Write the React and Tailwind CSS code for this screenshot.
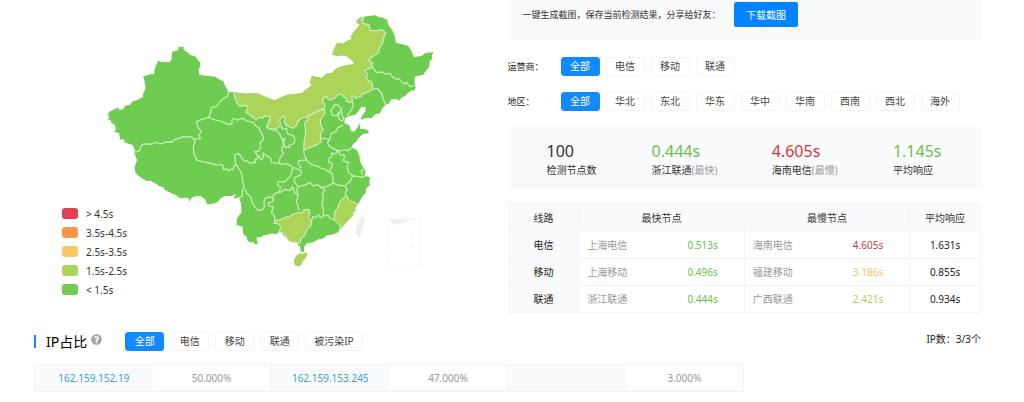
import { FaQuestionCircle } from 'react-icons/fa';

const LEGEND = [
  ['bg-[#e2414e]', '> 4.5s'],
  ['bg-[#ff9444]', '3.5s-4.5s'],
  ['bg-[#f9c766]', '2.5s-3.5s'],
  ['bg-[#acd459]', '1.5s-2.5s'],
  ['bg-[#6ecc50]', '< 1.5s'],
];

const STATS = [
  ['100', '检测节点数', '', 'text-[#2f3336]'],
  ['0.444s', '浙江联通', '(最快)', 'text-[#67c24a]'],
  ['4.605s', '海南电信', '(最慢)', 'text-[#d9363e]'],
  ['1.145s', '平均响应', '', 'text-[#67c24a]'],
];

const ROWS = [
  ['电信', '上海电信', '0.513s', '海南电信', '4.605s', 'text-[#cc3a42]', '1.631s'],
  ['移动', '上海移动', '0.496s', '福建移动', '3.186s', 'text-[#f2c46a]', '0.855s'],
  ['联通', '浙江联通', '0.444s', '广西联通', '2.421s', 'text-[#a5cf55]', '0.934s'],
];

const IPS = [
  ['162.159.152.19', '50.000%'],
  ['162.159.153.245', '47.000%'],
  ['', '3.000%'],
];

function Options({ items }) {
  return (
    <div className="flex flex-wrap gap-[6px]">
      {items.map((t, i) => (
        <button
          key={t}
          type="button"
          aria-pressed={i === 0}
          className={
            i === 0
              ? 'h-[19px] min-w-[39px] rounded-[3px] border border-[#1389ff] bg-[#1389ff] px-2 leading-[17px] text-white'
              : 'h-[19px] min-w-[39px] rounded-[3px] border border-[#f3f4f5] bg-white px-2 leading-[17px] text-[#444]'
          }
        >
          {t}
        </button>
      ))}
    </div>
  );
}

function ChinaMap() {
  return (
    <svg viewBox="-198 0 1421 900" className="w-full" role="img" aria-label="中国地图">
      <path
        fill="#6ecc50"
        d="M235 141L250 140L252 150L262 156L270 165L281 167L288 171L294 181L301 188L300 200L296 207L298 224L322 228L345 230L356 238L370 244L376 259L386 276L403 277L440 281L462 279L478 282L492 291L506 294L515 299L525 301L545 291L560 285L605 280L620 268L635 256L630 245L636 228L665 234L680 222L695 220L710 205L730 198L763 192L758 182L740 168L725 166L708 168L704 163L696 166L705 142L712 128L730 131L745 121L755 118L753 108L762 95L780 75L768 65L778 54L792 50L810 47L827 46L836 52L850 53L862 60L866 76L878 92L885 108L888 128L905 132L925 138L933 149L942 171L965 168L975 160L1001 156L996 166L998 176L990 182L988 202L978 212L970 224L945 230L944 250L947 262L944 272L938 270L925 278L912 290L906 292L899 302L890 298L875 298L868 310L858 314L848 324L840 340L828 342L815 354L795 355L783 360L785 350L797 334L797 322L785 320L774 336L765 345L748 348L735 355L733 370L748 375L752 391L762 396L772 384L779 371L782 387L792 387L807 392L805 400L788 403L776 414L768 426L760 432L755 442L772 452L779 470L781 486L790 503L797 512L795 528L811 533L808 545L810 556L799 565L797 580L788 588L778 607L772 615L765 622L770 630L761 636L760 646L750 658L736 670L723 688L718 688L716 696L708 700L692 705L680 706L672 715L655 719L640 727L620 731L613 741L612 757L602 755L600 735L595 740L593 728L570 726L555 710L540 695L528 703L515 701L500 705L492 705L484 711L470 713L473 733L465 733L460 726L450 728L443 722L440 710L430 703L428 680L410 675L411 655L425 637L423 609L417 592L400 597L408 582L396 588L375 588L363 595L356 603L345 610L322 614L315 597L303 589L290 588L276 593L268 605L265 593L240 595L229 586L215 580L195 570L190 562L180 560L165 549L150 542L142 544L125 535L107 520L104 503L111 480L103 458L105 450L98 435L75 428L72 419L60 418L58 400L42 395L48 390L45 375L35 370L32 361L24 359L28 350L23 345L28 335L50 325L56 324L58 330L70 327L76 317L90 314L98 304L112 300L128 292L130 280L137 265L132 235L128 230L152 223L163 222L163 210L169 195L175 182L185 186L208 187L215 178L216 156L235 150Z"
      />
      <g transform="translate(390 30)" fill="#acd459">
        <path d="M12 248L15 265L30 290L52 290L48 308L78 330L88 322L118 320L110 350L140 357L148 350L148 330L165 320L168 345L190 355L215 325L235 318L282 295L278 275L290 260L302 270L335 252L348 262L350 275L362 278L365 258L378 265L410 248L430 238L425 215L410 205L404 182L428 172L428 160L415 150L445 125L458 100L468 68L455 58L445 62L420 62L418 45L400 40L402 20L388 24L378 35L390 45L363 78L365 88L340 101L322 98L306 136L335 136L350 138L368 152L373 162L340 168L320 175L305 190L290 190L275 204L246 198L240 215L245 226L230 238L215 250L170 255L135 271L116 264L88 252L70 249L50 251Z" />
      </g>
      <g transform="translate(390 270)" fill="#acd459" stroke="#dff3d0" strokeWidth="3" strokeLinejoin="round">
        <path d="M232 80L238 74L250 72L265 62L283 57L285 72L275 84L272 90L272 105L280 118L273 132L272 145L275 155L270 160L245 172L222 180L222 160L228 125L225 110L225 95L232 92Z" />
        <path d="M135 392L150 390L165 382L178 380L190 372L205 368L215 370L220 360L237 358L240 372L235 382L245 392L243 410L233 415L228 428L222 440L216 443L210 460L195 458L180 456L168 440L165 430L148 428L152 410L145 402L132 400Z" />
        <path d="M330 335L340 323L350 318L358 333L372 336L384 345L376 356L380 362L371 366L370 376L350 398L333 418L328 402L312 390L315 365L324 352Z" />
        <path stroke="none" d="M200 496L208 491L222 491L226 487L233 492L228 505L218 514L215 524L208 530L194 525L192 510Z" />
      </g>
      <g fill="none" stroke="#c4ecb5" strokeWidth="4" strokeLinejoin="round">
        <path d="M386 275L383 290L370 296L360 305L350 320L335 322L332 338L326 352L310 357L289 366L294 380L304 395L296 405L302 417L280 416L277 412L250 410L237 415L225 418L215 427L195 427L185 432L175 430L165 427L155 433L130 432L122 440L120 452L103 457" />
        <path d="M280 416L286 424L280 440L282 460L290 480L310 486L335 490L348 495L368 495L372 510L380 506L385 514L392 508L400 510L402 498L410 495L425 520L427 535L432 560L426 575L428 588L418 592" />
        <path d="M326 352L345 360L365 364L385 373L396 372L396 360L402 355L412 361L420 357L430 355L440 363L460 367L466 376L478 385L482 398L491 410L489 421L480 428L482 442L476 454L465 455L470 463L475 475L465 480L468 487L450 490L440 482L432 484L425 472L415 460L405 465L405 482L408 495" />
        <path d="M470 468L480 470L482 480L490 475L490 458L497 465L505 470L512 475L515 488L527 488L540 492" />
      </g>
      <g transform="translate(390 30)" fill="none" stroke="#c4ecb5" strokeWidth="4" strokeLinejoin="round">
        <path d="M12 248L15 265L20 270L20 280L30 290L45 285L54 290L48 308L62 315L78 330L88 322L98 325L104 318L122 320L118 335L110 350L118 357L140 357L148 350L152 340L148 330L160 318L166 322L163 335L168 345L190 355L200 346L203 335L215 325L235 318L250 310L265 303L282 295L286 288L278 275L279 264L290 260L295 268L302 270L315 264L322 255L335 252L342 262L348 262L350 275L362 278L368 270L365 258L372 258L378 265L395 258L400 250L410 248L430 238L425 215L415 213L410 205L412 192L404 182L428 172L424 162L428 158L415 150L430 138L445 130L450 112L458 100L462 82L468 68L455 58L445 62L420 62L418 45L400 40L396 32L402 20" />
        <path d="M428 172L440 188L455 186L465 192L480 190L487 200L500 208L508 205L515 216L525 222L530 217L540 230L552 228" />
        <path d="M430 238L442 235L455 250L460 268L468 284M366 266L370 285L365 300L360 305L352 318M305 296L312 292L312 285L325 285L330 292L335 296L332 305L326 308L320 317L308 316L303 306ZM332 305L326 314L326 326L336 333L342 325L336 318L337 304" />
      </g>
      <g transform="translate(390 270)" fill="none" stroke="#c4ecb5" strokeWidth="4" strokeLinejoin="round">
        <path d="M115 115L130 120L140 122L150 135L158 150L160 165L155 175L160 190L150 205L148 215L150 222L172 222L190 232L205 238L215 242L212 255L195 262L193 275L205 290L200 300L205 315L200 335L208 362" />
        <path d="M152 105L158 118L170 115L172 130L192 138L195 155L188 163L178 165L180 172L165 172L162 155L166 145L155 148" />
        <path d="M190 232L185 245L182 258L165 275L145 275L142 285L152 292L148 305L130 315L130 325L120 320L105 325L102 340L104 350L98 358L84 362L75 350L68 340L62 320L50 310L48 302L42 300" />
        <path d="M148 310L165 298L180 302L188 290L195 310L205 315M130 325L128 336L115 340L118 350L130 350L125 370L133 376L135 392" />
        <path d="M222 180L222 190L230 210L207 212L205 222L214 235M230 210L236 218L250 225L265 230L275 235L290 240L298 247L308 252L310 280L290 290L275 293L262 284L250 288L240 278L228 284L205 290" />
        <path d="M275 145L288 147L300 148L303 132L318 125L325 112L340 106M298 148L293 160L302 172L320 180L330 183L345 180L355 182L365 173M322 180L318 192L305 190L306 200L298 205L296 215L308 222L300 245M322 180L330 194L345 198L340 212L356 218L352 230L356 248L370 258L385 260L395 262L405 258M403 238L394 242L398 256M310 280L328 286L345 288L360 275L370 256M345 288L352 300L346 306L350 320M275 293L285 300L278 310L280 325L276 345L281 360L280 378L295 376L300 385L312 390M280 378L272 384L265 375L258 384L248 380L246 392" />
      </g>
      <g transform="translate(390 270)" fill="#eeeeee">
        <path d="M394 382L403 380L405 394L397 418L389 445L378 428L380 410Z" />
        <path d="M474 388L558 387L552 392L530 391L518 399L497 403L484 398Z" />
        <path d="M472 387H568V527H472Z" fill="none" stroke="#f8f8f8" strokeWidth="3" />
        <path d="M551 428L549 444M549 460L542 476M534 488L528 496M488 420L492 432M485 484L487 492M506 508L514 512" fill="none" stroke="#f4f4f4" strokeWidth="3" />
      </g>
    </svg>
  );
}

export default function App() {
  return (
    <main className="bg-white pr-[43px] pb-[10px] pl-[34px] font-['Noto_Sans','Noto_Sans_CJK_SC',sans-serif] text-[10px] leading-[14px] text-[#333]">
      <div className="grid grid-cols-2">
        <section className="relative">
          <ChinaMap />
          <ul className="absolute top-[204px] left-[28px]">
            {LEGEND.map(([color, label]) => (
              <li key={label} className="flex h-[19px] items-center gap-2">
                <span className={`h-[11px] w-4 rounded-[3px] ${color}`} />
                {label}
              </li>
            ))}
          </ul>
        </section>

        <section>
          <div className="flex h-10 items-start justify-between bg-[#f9fafc] pt-[2px] pl-[15px]">
            <p className="text-[9px] leading-[25px]">一键生成截图，保存当前检测结果，分享给好友：</p>
            <button type="button" className="mr-[183px] h-[25px] w-16 shrink-0 rounded-[2px] bg-[#0084ff] text-white">
              下载截图
            </button>
          </div>

          <div className="mt-[17px] flex items-center">
            <span className="w-[53px] text-[9px] text-[#222]">运营商：</span>
            <Options items={['全部', '电信', '移动', '联通']} />
          </div>
          <div className="mt-4 flex items-center">
            <span className="w-[53px] text-[9px] text-[#222]">地区：</span>
            <Options items={['全部', '华北', '东北', '华东', '华中', '华南', '西南', '西北', '海外']} />
          </div>

          <dl className="mt-4 grid h-[61px] grid-cols-[105fr_120fr_121fr_88fr] items-center bg-[#f9fafc] pl-[39px]">
            {STATS.map(([value, name, note, color]) => (
              <div key={name} className="flex flex-col-reverse">
                <dt>
                  {name}
                  <span className="text-[#999]">{note}</span>
                </dt>
                <dd className={`text-base leading-6 ${color}`}>{value}</dd>
              </div>
            ))}
          </dl>

          <table className="mt-[15px] w-full table-fixed border-collapse text-center">
            <colgroup>
              <col className="w-[15%]" />
              <col />
              <col />
              <col />
              <col />
              <col className="w-[15%]" />
            </colgroup>
            <thead className="bg-[#f9fafc]">
              <tr className="h-7">
                <th scope="col" className="border border-[#f2f4f5] font-normal">线路</th>
                <th scope="col" colSpan={2} className="border border-[#f2f4f5] font-normal">最快节点</th>
                <th scope="col" colSpan={2} className="border border-[#f2f4f5] font-normal">最慢节点</th>
                <th scope="col" className="border border-[#f2f4f5] font-normal">平均响应</th>
              </tr>
            </thead>
            <tbody>
              {ROWS.map(([line, fast, fastTime, slow, slowTime, slowColor, avg]) => (
                <tr key={line} className="h-[27px]">
                  <th scope="row" className="border border-[#f2f4f5] bg-[#f9fafc] font-normal text-[#222]">{line}</th>
                  <td className="border-y border-[#f2f4f5] pl-2 text-left text-[#999]">{fast}</td>
                  <td className="border-y border-[#f2f4f5] text-[#67c24a]">{fastTime}</td>
                  <td className="border-y border-l border-[#f2f4f5] pl-2 text-left text-[#999]">{slow}</td>
                  <td className={`border-y border-[#f2f4f5] ${slowColor}`}>{slowTime}</td>
                  <td className="border border-[#f2f4f5] text-[#222]">{avg}</td>
                </tr>
              ))}
            </tbody>
          </table>
        </section>
      </div>

      <div className="mt-[19px] flex h-[19px] items-center">
        <span className="h-[13px] w-[2px] bg-[#1389ff]" />
        <h2 className="ml-[10px] text-sm leading-[19px] text-black">IP占比</h2>
        <button type="button" aria-label="说明" className="ml-1 self-start pt-[2px] text-[#a8a4a0]">
          <FaQuestionCircle size={11} />
        </button>
        <div className="ml-[23px]">
          <Options items={['全部', '电信', '移动', '联通', '被污染IP']} />
        </div>
        <p className="ml-auto self-start text-[#222]">IP数：3/3个</p>
      </div>

      <table className="mt-[13px] h-7 w-3/4 table-fixed border-collapse text-center">
        <tbody>
          <tr>
            {IPS.map(([ip, share]) => [
              <td key={share + 'ip'} className="border-y border-l border-[#f0f3f4] bg-[#f9fafc]">
                {ip && <a href="#ip" className="text-[#3d9be0]">{ip}</a>}
              </td>,
              <td key={share} className="border-y border-r border-[#f0f3f4] text-[#999]">{share}</td>,
            ])}
          </tr>
        </tbody>
      </table>
    </main>
  );
}
